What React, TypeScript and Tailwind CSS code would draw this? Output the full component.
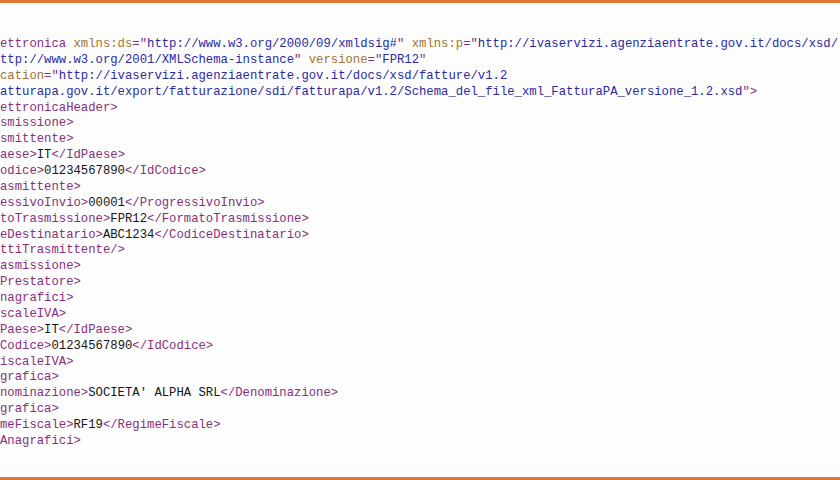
type Kind = "t" | "a" | "v" | "x";
type Token = [Kind, string];

// visible part of the XML listing (left side is clipped by the window)
const lines: Token[][] = [
  [
    ["t", "ettronica "],
    ["a", "xmlns:ds"],
    ["t", '="'],
    ["v", "http://www.w3.org/2000/09/xmldsig#"],
    ["t", '" '],
    ["a", "xmlns:p"],
    ["t", '="'],
    ["v", "http://ivaservizi.agenziaentrate.gov.it/docs/xsd/"],
  ],
  [
    ["v", "ttp://www.w3.org/2001/XMLSchema-instance"],
    ["t", '" '],
    ["a", "versione"],
    ["t", '="'],
    ["v", "FPR12"],
    ["t", '"'],
  ],
  [
    ["a", "cation"],
    ["t", '="'],
    ["v", "http://ivaservizi.agenziaentrate.gov.it/docs/xsd/fatture/v1.2"],
  ],
  [
    ["v", "atturapa.gov.it/export/fatturazione/sdi/fatturapa/v1.2/Schema_del_file_xml_FatturaPA_versione_1.2.xsd"],
    ["t", '">'],
  ],
  [["t", "ettronicaHeader>"]],
  [["t", "smissione>"]],
  [["t", "smittente>"]],
  [["t", "aese>"], ["x", "IT"], ["t", "</IdPaese>"]],
  [["t", "odice>"], ["x", "01234567890"], ["t", "</IdCodice>"]],
  [["t", "asmittente>"]],
  [["t", "essivoInvio>"], ["x", "00001"], ["t", "</ProgressivoInvio>"]],
  [["t", "toTrasmissione>"], ["x", "FPR12"], ["t", "</FormatoTrasmissione>"]],
  [["t", "eDestinatario>"], ["x", "ABC1234"], ["t", "</CodiceDestinatario>"]],
  [["t", "ttiTrasmittente/>"]],
  [["t", "asmissione>"]],
  [["t", "Prestatore>"]],
  [["t", "nagrafici>"]],
  [["t", "scaleIVA>"]],
  [["t", "Paese>"], ["x", "IT"], ["t", "</IdPaese>"]],
  [["t", "Codice>"], ["x", "01234567890"], ["t", "</IdCodice>"]],
  [["t", "iscaleIVA>"]],
  [["t", "grafica>"]],
  [["t", "nominazione>"], ["x", "SOCIETA' ALPHA SRL"], ["t", "</Denominazione>"]],
  [["t", "grafica>"]],
  [["t", "meFiscale>"], ["x", "RF19"], ["t", "</RegimeFiscale>"]],
  [["t", "Anagrafici>"]],
];

const colour: Record<Kind, string> = {
  t: "text-[#86307a]",
  a: "text-[#9c7434]",
  v: "text-[#2a2aa2]",
  x: "text-[#151515]",
};

export default function App() {
  return (
    <div className="w-[840px] h-[480px] flex flex-col bg-[#fdfdfd] overflow-hidden">
      <div className="h-[3px] bg-[#dc7535] shrink-0" />
      <div className="flex-1 overflow-hidden pt-[34px]">
        <pre className="font-['Liberation_Mono',monospace] text-[12.25px] leading-[15.88px] whitespace-pre">
          {lines.map((line, i) => (
            <div key={i}>
              {line.map(([k, s], j) => (
                <span key={j} className={colour[k]}>
                  {s}
                </span>
              ))}
            </div>
          ))}
        </pre>
      </div>
      <div className="h-[3px] bg-[#dc7535] shrink-0" />
    </div>
  );
}
